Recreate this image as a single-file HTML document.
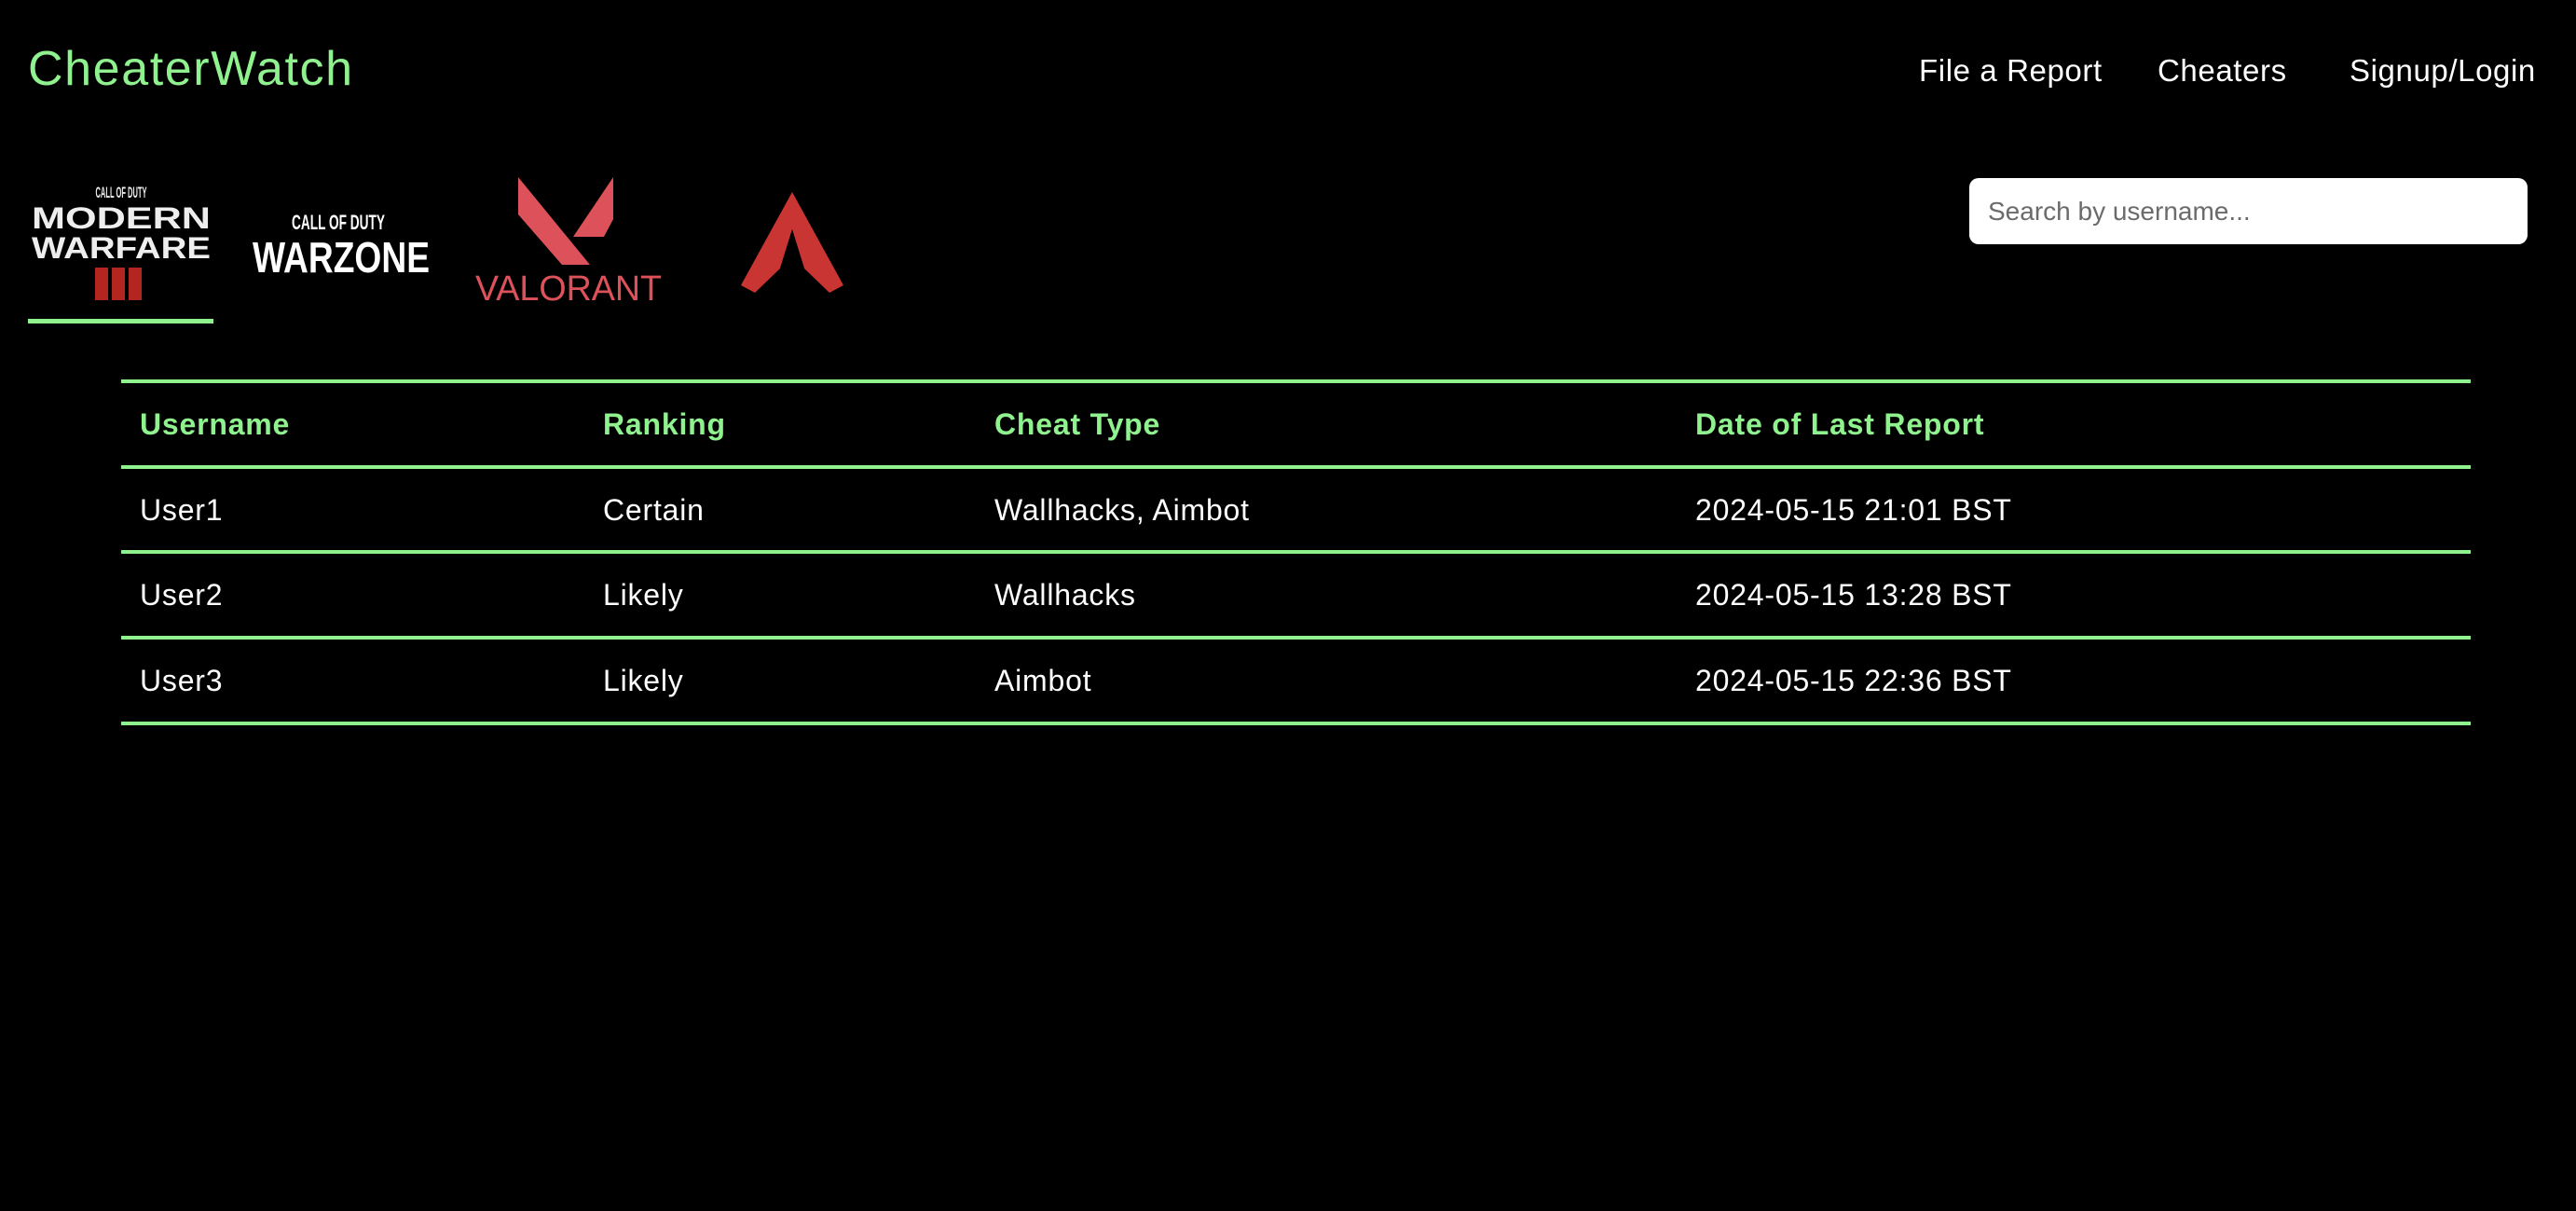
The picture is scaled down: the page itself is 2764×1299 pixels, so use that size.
<!DOCTYPE html>
<html><head><meta charset="utf-8"><style>
*{margin:0;padding:0;box-sizing:border-box}
body{width:2764px;height:1299px;background:#000;font-family:"Liberation Sans",sans-serif;position:relative;overflow:hidden;color:#fff}
.brand{position:absolute;left:30px;top:44px;font-size:52px;color:#8ff28f;letter-spacing:1.6px}
.nav{position:absolute;top:57px;font-size:33px;color:#fff;letter-spacing:0.6px}
.search{position:absolute;left:2113px;top:191px;width:599px;height:71px;background:#fff;border-radius:10px;color:#6b6b6b;font-size:28px;padding:20px 0 0 20px}
.line{position:absolute;left:130px;width:2521px;height:4px;background:#8ff28f}
.cell{position:absolute;font-size:32px;letter-spacing:0.8px}
.h{color:#8ff28f;font-weight:bold}
</style></head><body>
<div class="brand">CheaterWatch</div>
<div class="nav" style="left:2059px">File a Report</div>
<div class="nav" style="left:2315px">Cheaters</div>
<div class="nav" style="left:2521px">Signup/Login</div>

<svg style="position:absolute;left:30px;top:190px" width="200" height="135" viewBox="0 0 200 135">
<text x="100" y="22" font-size="17" font-weight="bold" fill="#eee" text-anchor="middle" textLength="55" lengthAdjust="spacingAndGlyphs">CALL OF DUTY</text>
<text x="100" y="55" font-size="32" font-weight="bold" fill="#eee" text-anchor="middle" textLength="192" lengthAdjust="spacingAndGlyphs">MODERN</text>
<text x="100" y="87" font-size="32" font-weight="bold" fill="#eee" text-anchor="middle" textLength="192" lengthAdjust="spacingAndGlyphs">WARFARE</text>
<rect x="72" y="97" width="14" height="35" fill="#b2261f"/><rect x="90" y="97" width="14" height="35" fill="#b2261f"/><rect x="108" y="97" width="14" height="35" fill="#b2261f"/>
</svg>
<div style="position:absolute;left:30px;top:342px;width:199px;height:5px;background:#8ff28f"></div>

<svg style="position:absolute;left:268px;top:224px" width="200" height="72" viewBox="0 0 200 72">
<text x="95" y="22" font-size="22" font-weight="bold" fill="#fff" text-anchor="middle" textLength="100" lengthAdjust="spacingAndGlyphs">CALL OF DUTY</text>
<text x="98" y="68" font-size="46" font-weight="bold" fill="#fff" text-anchor="middle" textLength="190" lengthAdjust="spacingAndGlyphs">WARZONE</text>
</svg>

<svg style="position:absolute;left:508px;top:190px" width="205" height="136" viewBox="0 0 205 136">
<polygon points="48,0 48,40 95,94 125,94" fill="#dd525a"/>
<polygon points="150,0 150,45 140,64 107,64" fill="#dd525a"/>
<text x="102" y="132" font-size="38" fill="#dd525a" text-anchor="middle" textLength="200" lengthAdjust="spacingAndGlyphs">VALORANT</text>
</svg>

<svg style="position:absolute;left:795px;top:206px" width="110" height="108" viewBox="0 0 110 108">
<polygon points="55,0 110,100 95,108 68,82 55,40 42,82 15,108 0,100" fill="#c93532"/>
<polygon points="55,40 68,82 42,82" fill="#000"/>
</svg>

<div class="search">Search by username...</div>

<div class="line" style="top:407px"></div>
<div class="line" style="top:499px"></div>
<div class="line" style="top:590px"></div>
<div class="line" style="top:682px"></div>
<div class="line" style="top:774px"></div>

<div class="cell h" style="left:150px;top:437px">Username</div>
<div class="cell h" style="left:647px;top:437px">Ranking</div>
<div class="cell h" style="left:1067px;top:437px">Cheat Type</div>
<div class="cell h" style="left:1819px;top:437px">Date of Last Report</div>

<div class="cell" style="left:150px;top:529px">User1</div>
<div class="cell" style="left:647px;top:529px">Certain</div>
<div class="cell" style="left:1067px;top:529px">Wallhacks, Aimbot</div>
<div class="cell" style="left:1819px;top:529px">2024-05-15 21:01 BST</div>

<div class="cell" style="left:150px;top:620px">User2</div>
<div class="cell" style="left:647px;top:620px">Likely</div>
<div class="cell" style="left:1067px;top:620px">Wallhacks</div>
<div class="cell" style="left:1819px;top:620px">2024-05-15 13:28 BST</div>

<div class="cell" style="left:150px;top:712px">User3</div>
<div class="cell" style="left:647px;top:712px">Likely</div>
<div class="cell" style="left:1067px;top:712px">Aimbot</div>
<div class="cell" style="left:1819px;top:712px">2024-05-15 22:36 BST</div>
</body></html>
